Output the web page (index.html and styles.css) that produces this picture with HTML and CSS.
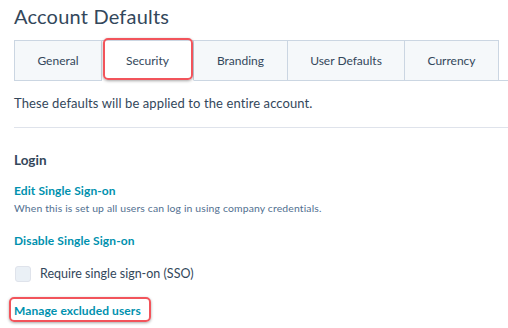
FILE: index.html
```html
<!DOCTYPE html>
<html>
<head>
<meta charset="utf-8">
<link rel="stylesheet" href="styles.css">
</head>
<body>
<div class="page">
  <h1 class="title">Account Defaults</h1>
  <div class="tabs">
    <div class="tab">General</div>
    <div class="tab active">Security<span class="hl hl-tab"></span></div>
    <div class="tab">Branding</div>
    <div class="tab tab-wide">User Defaults</div>
    <div class="tab">Currency</div>
    <div class="tabs-rest"></div>
  </div>
  <p class="intro">These defaults will be applied to the entire account.</p>
  <div class="rule"></div>
  <h2 class="section">Login</h2>
  <a class="link link-edit">Edit Single Sign-on</a>
  <p class="help">When this is set up all users can log in using company credentials.</p>
  <a class="link link-disable">Disable Single Sign-on</a>
  <label class="check">
    <span class="box"></span>
    <span class="check-label">Require single sign-on (SSO)</span>
  </label>
  <a class="link link-manage">Manage excluded users<span class="hl hl-link"></span></a>
</div>
</body>
</html>
```

FILE: styles.css
```css
* { box-sizing: border-box; }
html, body { margin: 0; padding: 0; background: #fff; }
body {
  font-family: Lato, "Noto Sans", sans-serif;
  color: #33475b;
  width: 508px;
  height: 328px;
  overflow: hidden;
}
.page {
  padding: 0 0 0 14px;
  display: flex;
  flex-direction: column;
  align-items: flex-start;
}
.title {
  margin: 4px 0 0 0;
  font-size: 20px;
  font-weight: 400;
  line-height: 24px;
  letter-spacing: 0.2px;
  color: #33475b;
}
.tabs {
  margin-top: 12px;
  display: flex;
  width: 494px;
  align-self: stretch;
  height: 41px;
}
.tab {
  position: relative;
  width: 88px;
  height: 41px;
  display: flex;
  align-items: center;
  justify-content: center;
  background: #f5f8fa;
  border: 1px solid #cbd6e2;
  border-left: none;
  font-size: 12px;
  color: #33475b;
}
.tab:first-child { border-left: 1px solid #cbd6e2; width: 88px; }
.tab:nth-child(2) { width: 92px; }
.tab:nth-child(3) { width: 94px; }
.tab-wide { width: 117px !important; }
.tab:nth-child(5) { width: 94px; }
.tab.active {
  background: #fff;
  border-bottom-color: #fff;
  border-top-color: #cbd6e2;
}
.tabs-rest {
  flex: 1;
  border-bottom: 1px solid #cbd6e2;
}
.hl {
  position: absolute;
  border: 2.5px solid #f2545b;
  border-radius: 5px;
  box-shadow: 0 1px 3px rgba(0,0,0,0.35);
  pointer-events: none;
}
.hl-tab {
  left: 1px;
  right: 0px;
  top: -3px;
  bottom: 0px;
}
.intro {
  margin: 14px 0 0 0;
  font-size: 13px;
  line-height: 16px;
  letter-spacing: 0.1px;
}
.rule {
  margin-top: 16px;
  height: 1px;
  background: #dfe3eb;
  align-self: stretch;
}
.section {
  margin: 24px 0 0 0;
  font-size: 13.5px;
  font-weight: 700;
  line-height: 16px;
}
.link {
  position: relative;
  color: #0091ae;
  font-weight: 700;
  font-size: 12px;
  line-height: 14px;
  letter-spacing: 0.1px;
}
.link-edit { margin-top: 16px; }
.help {
  margin: 4px 0 0 0;
  font-size: 10.4px;
  line-height: 12px;
  letter-spacing: 0.15px;
  color: #516f90;
}
.link-disable { margin-top: 20px; }
.check {
  margin-top: 18px;
  display: flex;
  align-items: center;
  margin-left: 1px;
}
.box {
  width: 16px;
  height: 16px;
  border-radius: 3px;
  background: #eaf0f6;
  border: 1px solid #dfe3eb;
}
.check-label {
  margin-left: 9px;
  font-size: 12.5px;
  line-height: 16px;
}
.link-manage { margin-top: 22px; }
.hl-link {
  left: -5px;
  right: -10px;
  top: -7px;
  bottom: -4px;
}
```
